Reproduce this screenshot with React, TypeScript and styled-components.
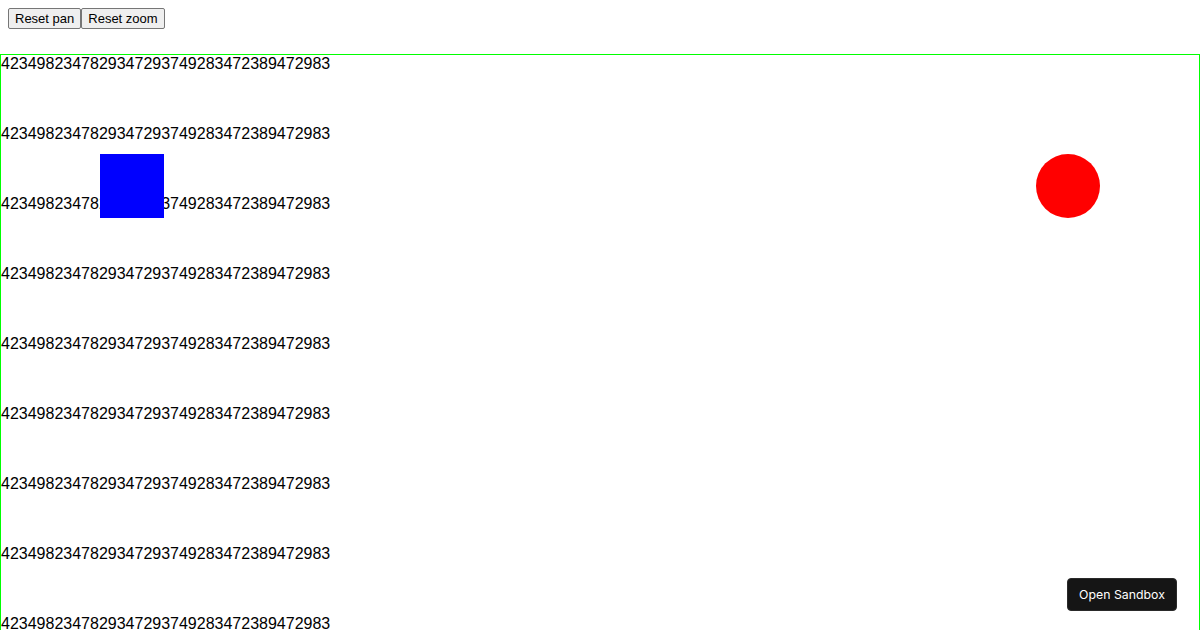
import React from "react";
import styled, { createGlobalStyle } from "styled-components";

const GlobalStyle = createGlobalStyle`
  html, body {
    margin: 0;
    padding: 0;
    background: #fff;
    overflow: hidden;
  }
  body {
    font-family: "Liberation Sans", Arial, sans-serif;
    color: #000;
  }
`;

const LINE = "4234982347829347293749283472389472983";

export default function App() {
  const lines = Array.from({ length: 9 }, (_, i) => i);
  return (
    <>
      <GlobalStyle />
      <Toolbar>
        <ToolButton>Reset pan</ToolButton>
        <ToolButton>Reset zoom</ToolButton>
      </Toolbar>
      <Canvas>
        {lines.map((i) => (
          <TextLine key={i}>{LINE}</TextLine>
        ))}
        <Square />
        <Circle />
      </Canvas>
      <SandboxButton>Open Sandbox</SandboxButton>
    </>
  );
}

const Toolbar = styled.div`
  display: flex;
  padding: 8px 8px 0;
  height: 21px;
`;

const ToolButton = styled.button`
  font-family: "Liberation Sans", Arial, sans-serif;
  font-size: 13px;
  height: 21px;
  padding: 1px 6px;
  background: #efefef;
  border: 1px solid #767676;
  border-radius: 2px;
  color: #000;
`;

const Canvas = styled.div`
  position: relative;
  margin-top: 25px;
  height: 600px;
  border: 1px solid #00ff00;
  overflow: hidden;
`;

const TextLine = styled.div`
  font-size: 16px;
  line-height: 18px;
  height: 70px;
`;

const Square = styled.div`
  position: absolute;
  left: 99px;
  top: 99px;
  width: 64px;
  height: 64px;
  background: #0000ff;
`;

const Circle = styled.div`
  position: absolute;
  left: 1035px;
  top: 99px;
  width: 64px;
  height: 64px;
  border-radius: 50%;
  background: #ff0000;
`;

const SandboxButton = styled.button`
  position: fixed;
  right: 23px;
  bottom: 19px;
  height: 33px;
  width: 110px;
  padding: 0;
  background: #151515;
  color: #fff;
  border: 1px solid #2a2a2a;
  border-radius: 4px;
  font-family: "Inter", "Liberation Sans", sans-serif;
  font-size: 12.3px;
`;
